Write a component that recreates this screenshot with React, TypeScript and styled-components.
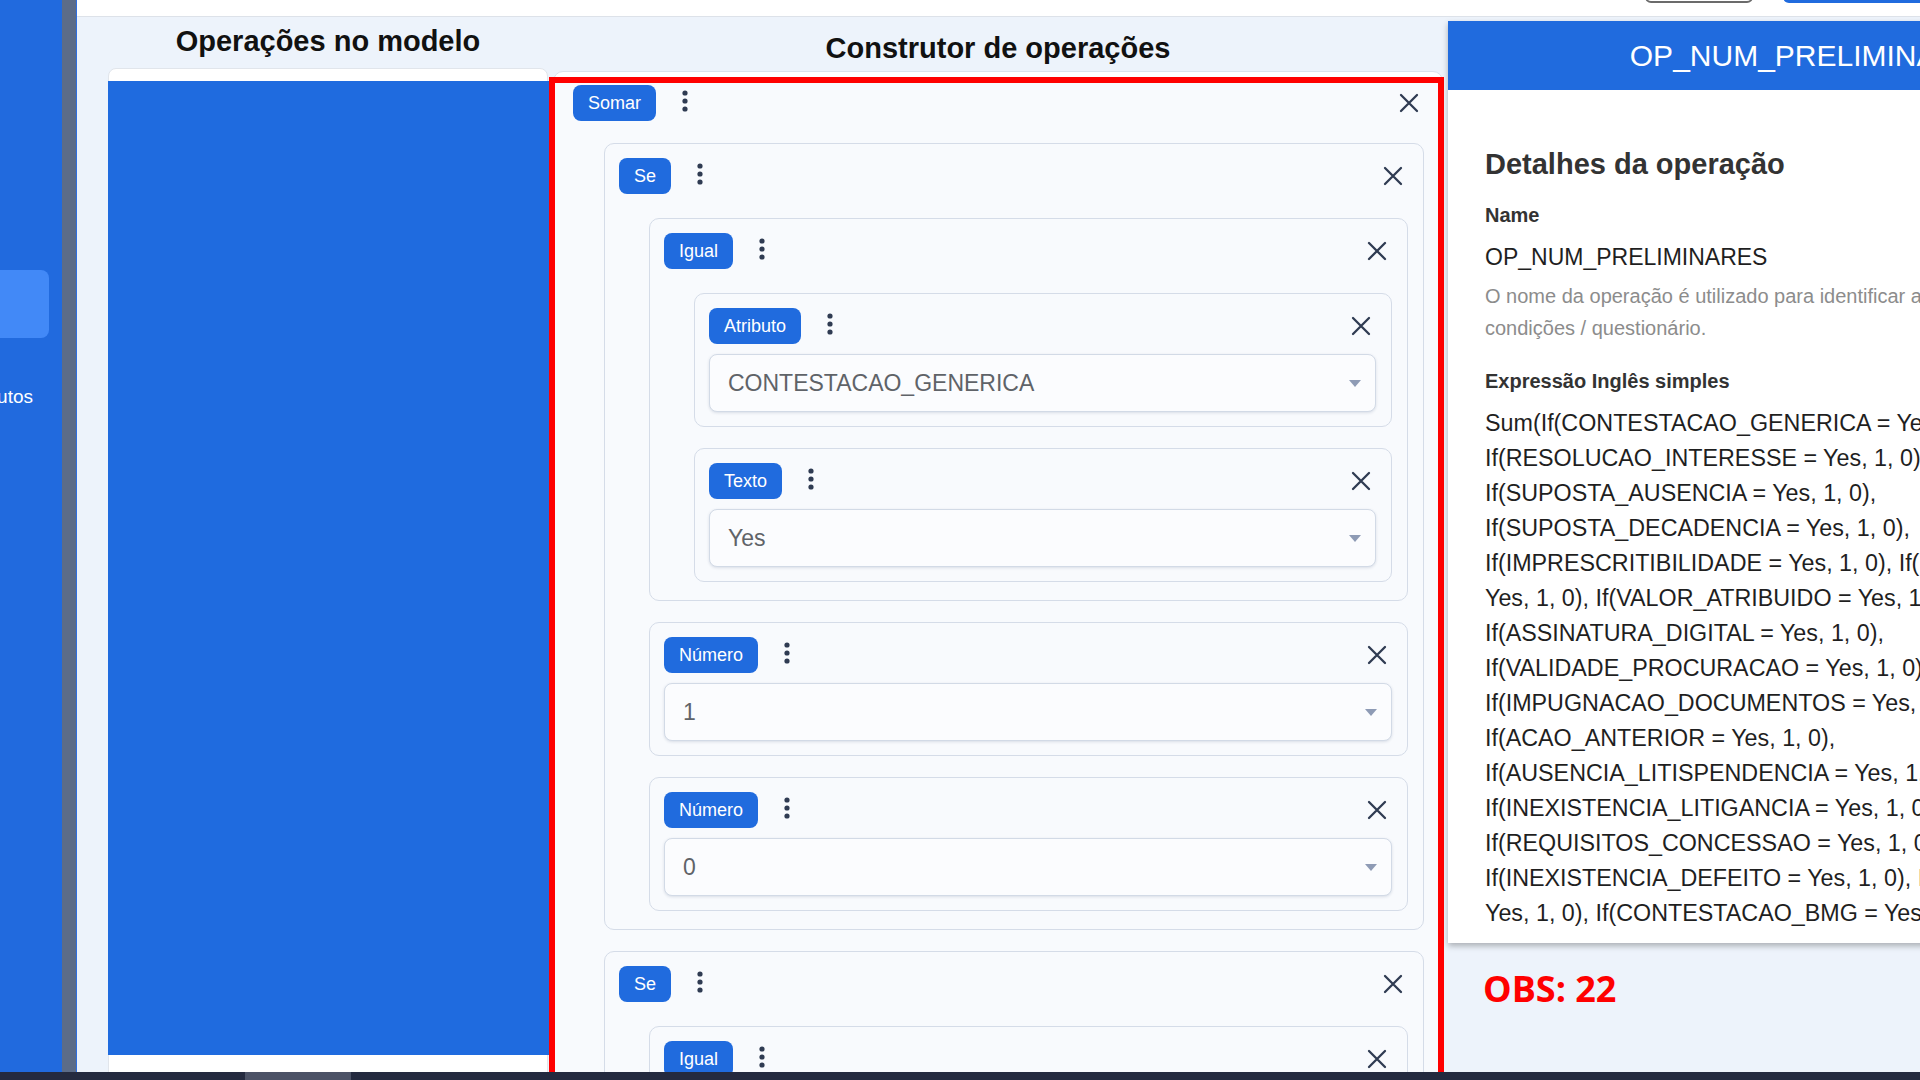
import { createGlobalStyle, styled } from "styled-components";

type Op = { label: string; value?: string; children?: Op[] };

const tree: Op = {
  label: "Somar",
  children: [
    {
      label: "Se",
      children: [
        {
          label: "Igual",
          children: [
            { label: "Atributo", value: "CONTESTACAO_GENERICA" },
            { label: "Texto", value: "Yes" },
          ],
        },
        { label: "Número", value: "1" },
        { label: "Número", value: "0" },
      ],
    },
    {
      label: "Se",
      children: [
        {
          label: "Igual",
          children: [
            { label: "Atributo", value: "RESOLUCAO_INTERESSE" },
            { label: "Texto", value: "Yes" },
          ],
        },
        { label: "Número", value: "1" },
        { label: "Número", value: "0" },
      ],
    },
  ],
};

const expression = [
  "Sum(If(CONTESTACAO_GENERICA = Yes, 1, 0),",
  "If(RESOLUCAO_INTERESSE = Yes, 1, 0),",
  "If(SUPOSTA_AUSENCIA = Yes, 1, 0),",
  "If(SUPOSTA_DECADENCIA = Yes, 1, 0),",
  "If(IMPRESCRITIBILIDADE = Yes, 1, 0), If(PRESCRICAO_QUINQUENAL =",
  "Yes, 1, 0), If(VALOR_ATRIBUIDO = Yes, 1, 0),",
  "If(ASSINATURA_DIGITAL = Yes, 1, 0),",
  "If(VALIDADE_PROCURACAO = Yes, 1, 0),",
  "If(IMPUGNACAO_DOCUMENTOS = Yes, 1, 0),",
  "If(ACAO_ANTERIOR = Yes, 1, 0),",
  "If(AUSENCIA_LITISPENDENCIA = Yes, 1, 0),",
  "If(INEXISTENCIA_LITIGANCIA = Yes, 1, 0),",
  "If(REQUISITOS_CONCESSAO = Yes, 1, 0),",
  "If(INEXISTENCIA_DEFEITO = Yes, 1, 0), If(PAGAMENTO_CUSTAS =",
  "Yes, 1, 0), If(CONTESTACAO_BMG = Yes, 1, 0))",
];

function Kebab() {
  return (
    <KebabButton>
      <svg width="8" height="24" viewBox="0 0 8 24">
        <circle cx="4" cy="4" r="2.6" fill="#2f3b52" />
        <circle cx="4" cy="12" r="2.6" fill="#2f3b52" />
        <circle cx="4" cy="20" r="2.6" fill="#2f3b52" />
      </svg>
    </KebabButton>
  );
}

function Close() {
  return (
    <CloseButton>
      <svg width="20" height="20" viewBox="0 0 20 20">
        <path d="M2 2 L18 18 M18 2 L2 18" stroke="#2f3b52" strokeWidth="2.3" strokeLinecap="round" />
      </svg>
    </CloseButton>
  );
}

function OpNode({ op, root }: { op: Op; root?: boolean }) {
  return (
    <Node $root={root}>
      <NodeHeader>
        <Badge>{op.label}</Badge>
        <Kebab />
        <Close />
      </NodeHeader>
      {op.value !== undefined && (
        <Select>
          <span>{op.value}</span>
          <svg width="12" height="7" viewBox="0 0 12 7">
            <path d="M0 0 H12 L6 7 Z" fill="#8e9bb5" />
          </svg>
        </Select>
      )}
      {op.children && (
        <Children $root={root}>
          {op.children.map((child, i) => (
            <OpNode key={i} op={child} />
          ))}
        </Children>
      )}
    </Node>
  );
}

export default function App() {
  return (
    <>
      <GlobalStyle />
      <Page>
        <Body>
          <Sidebar>
            <NavItem $active />
            <NavLabel>
              <span>Atributos</span>
            </NavLabel>
          </Sidebar>
          <SideScroll />
          <Main>
            <TopBar>
              <OutlineButton />
              <PrimaryButton />
            </TopBar>
            <Columns>
              <Column>
                <ColumnTitle $top={7}>Operações no modelo</ColumnTitle>
                <ModelCard>
                  <ModelList />
                </ModelCard>
              </Column>
              <Column>
                <ColumnTitle $top={14}>Construtor de operações</ColumnTitle>
                <BuilderCard>
                  <Highlight>
                    <OpNode op={tree} root />
                  </Highlight>
                </BuilderCard>
              </Column>
              <DetailsColumn>
                <DetailsPanel>
                  <DetailsHeader>OP_NUM_PRELIMINARES</DetailsHeader>
                  <DetailsBody>
                    <DetailsTitle>Detalhes da operação</DetailsTitle>
                    <FieldLabel>Name</FieldLabel>
                    <FieldValue>OP_NUM_PRELIMINARES</FieldValue>
                    <FieldHint>
                      O nome da operação é utilizado para identificar a operação nas
                      <br />
                      condições / questionário.
                    </FieldHint>
                    <FieldLabel $top={25}>Expressão Inglês simples</FieldLabel>
                    <Expression>{expression.join("\n")}</Expression>
                  </DetailsBody>
                </DetailsPanel>
                <Note>OBS: 22</Note>
              </DetailsColumn>
            </Columns>
          </Main>
        </Body>
        <HScroll>
          <HThumb />
        </HScroll>
      </Page>
    </>
  );
}

const GlobalStyle = createGlobalStyle`
  html, body {
    margin: 0;
    padding: 0;
    overflow: hidden;
  }
  body {
    font-family: "Liberation Sans", Arial, sans-serif;
    color: #1f1f1f;
  }
  * {
    box-sizing: border-box;
  }
`;

const Page = styled.div`
  height: 100vh;
  display: flex;
  flex-direction: column;
  overflow: hidden;
`;

const Body = styled.div`
  flex: 1;
  min-height: 0;
  display: flex;
`;

const Sidebar = styled.nav`
  width: 62px;
  flex-shrink: 0;
  background: #216ade;
  padding-top: 270px;
  display: flex;
  flex-direction: column;
  overflow: hidden;
`;

const NavItem = styled.div<{ $active?: boolean }>`
  height: 68px;
  margin-right: 13px;
  border-radius: 0 8px 8px 0;
  background: ${(p) => (p.$active ? "#4289f7" : "transparent")};
`;

const NavLabel = styled.div`
  margin-top: 48px;
  display: flex;
  justify-content: flex-end;
  padding-right: 29px;
  white-space: nowrap;
  color: #fff;
  font-size: 19px;
`;

const SideScroll = styled.div`
  width: 15px;
  flex-shrink: 0;
  background: #5c6c88;
  border-right: 1px solid #2f6fe0;
`;

const Main = styled.main`
  flex: 1;
  min-width: 0;
  display: flex;
  flex-direction: column;
  background: #edf3fb;
  overflow: hidden;
`;

const TopBar = styled.header`
  height: 17px;
  flex-shrink: 0;
  background: #fff;
  border-bottom: 1px solid #dde2e9;
  display: flex;
  justify-content: flex-end;
  align-items: flex-end;
  overflow: hidden;
`;

const OutlineButton = styled.div`
  width: 108px;
  height: 40px;
  margin-bottom: 13px;
  border: 2px solid #6b6b6b;
  border-radius: 6px;
  flex-shrink: 0;
`;

const PrimaryButton = styled.div`
  width: 170px;
  height: 40px;
  margin: 0 -33px 13px 30px;
  background: #206bde;
  border-radius: 6px;
  flex-shrink: 0;
`;

const Columns = styled.div`
  flex: 1;
  min-height: 0;
  display: grid;
  grid-template-columns: 440px 890px 732px;
  align-items: start;
  column-gap: 5px;
  padding-left: 31px;
  overflow: hidden;
`;

const Column = styled.section`
  display: flex;
  flex-direction: column;
  min-width: 0;
`;

const ColumnTitle = styled.h2<{ $top: number }>`
  margin: ${(p) => p.$top}px 0 0;
  font-size: 29px;
  line-height: 34px;
  font-weight: 700;
  text-align: center;
  color: #111;
`;

const ModelCard = styled.div`
  margin-top: 10px;
  padding-top: 12px;
  height: 1100px;
  background: #fff;
  border: 1px solid #e1e5eb;
  border-radius: 8px;
`;

const ModelList = styled.div`
  height: 974px;
  margin: 0 -5px 0 -1px;
  background: #1f6bdf;
`;

const BuilderCard = styled.div`
  margin-top: 6px;
  background: #fff;
  border: 1px solid #dbe2ec;
  border-radius: 10px;
`;

const Highlight = styled.div`
  margin: 5px -2px 0 -5px;
  border: 6px solid #ff0000;
  background: #f8fafd;
`;

const Node = styled.div<{ $root?: boolean }>`
  display: flex;
  flex-direction: column;
  background: ${(p) => (p.$root ? "transparent" : "#f8fafd")};
  border: ${(p) => (p.$root ? "none" : "1px solid #d5dce8")};
  border-radius: 10px;
  padding: ${(p) => (p.$root ? "2px 14px 22px 18px" : "14px 15px 18px 14px")};
`;

const NodeHeader = styled.div`
  display: flex;
  align-items: center;
  height: 36px;
`;

const Badge = styled.span`
  height: 36px;
  padding: 0 15px;
  display: inline-flex;
  align-items: center;
  background: #206bde;
  color: #fff;
  border-radius: 8px;
  font-size: 18px;
`;

const KebabButton = styled.span`
  width: 20px;
  margin-left: 19px;
  display: flex;
  justify-content: center;
  margin-top: -4px;
`;

const CloseButton = styled.span`
  width: 30px;
  height: 30px;
  margin-left: auto;
  display: flex;
  align-items: center;
  justify-content: center;
`;

const Select = styled.div`
  margin: 10px 0 -4px;
  height: 58px;
  padding: 0 14px 0 18px;
  display: flex;
  align-items: center;
  justify-content: space-between;
  background: #fbfcfe;
  border: 1px solid #d2dae6;
  border-radius: 8px;
  box-shadow: 0 1px 3px rgba(30, 50, 90, 0.14);
  color: #5f6368;
  font-size: 23px;
`;

const Children = styled.div<{ $root?: boolean }>`
  display: flex;
  flex-direction: column;
  gap: 21px;
  margin-top: ${(p) => (p.$root ? 22 : 24)}px;
  margin-left: ${(p) => (p.$root ? 31 : 30)}px;
`;

const DetailsColumn = styled.aside`
  display: flex;
  flex-direction: column;
  padding-top: 4px;
`;

const DetailsPanel = styled.div`
  background: #fff;
  box-shadow: 0 3px 6px rgba(0, 0, 0, 0.28);
`;

const DetailsHeader = styled.div`
  height: 69px;
  display: flex;
  align-items: center;
  justify-content: center;
  background: #206bde;
  color: #fff;
  font-size: 30px;
`;

const DetailsBody = styled.div`
  padding: 57px 37px 12px;
  display: flex;
  flex-direction: column;
`;

const DetailsTitle = styled.h3`
  margin: 0;
  font-size: 29px;
  line-height: 34px;
  font-weight: 700;
  color: #333;
`;

const FieldLabel = styled.div<{ $top?: number }>`
  margin-top: ${(p) => p.$top ?? 22}px;
  font-size: 20px;
  line-height: 24px;
  font-weight: 700;
  color: #333;
`;

const FieldValue = styled.div`
  margin-top: 15px;
  font-size: 23px;
  line-height: 30px;
  color: #1f1f1f;
`;

const FieldHint = styled.p`
  margin: 8px 0 0;
  font-size: 20px;
  line-height: 32px;
  color: #8c8c8c;
  white-space: nowrap;
`;

const Expression = styled.div`
  margin-top: 13px;
  font-size: 23.3px;
  line-height: 35px;
  color: #1f1f1f;
  white-space: pre;
`;

const Note = styled.div`
  margin: 24px 0 0 35px;
  font-family: "Open Sans", "Liberation Sans", sans-serif;
  font-weight: 700;
  font-size: 36px;
  line-height: 44px;
  color: #ff0000;
`;

const HScroll = styled.div`
  height: 8px;
  flex-shrink: 0;
  background: #242a3f;
  padding-left: 245px;
`;

const HThumb = styled.div`
  width: 106px;
  height: 100%;
  background: #4c5266;
`;
